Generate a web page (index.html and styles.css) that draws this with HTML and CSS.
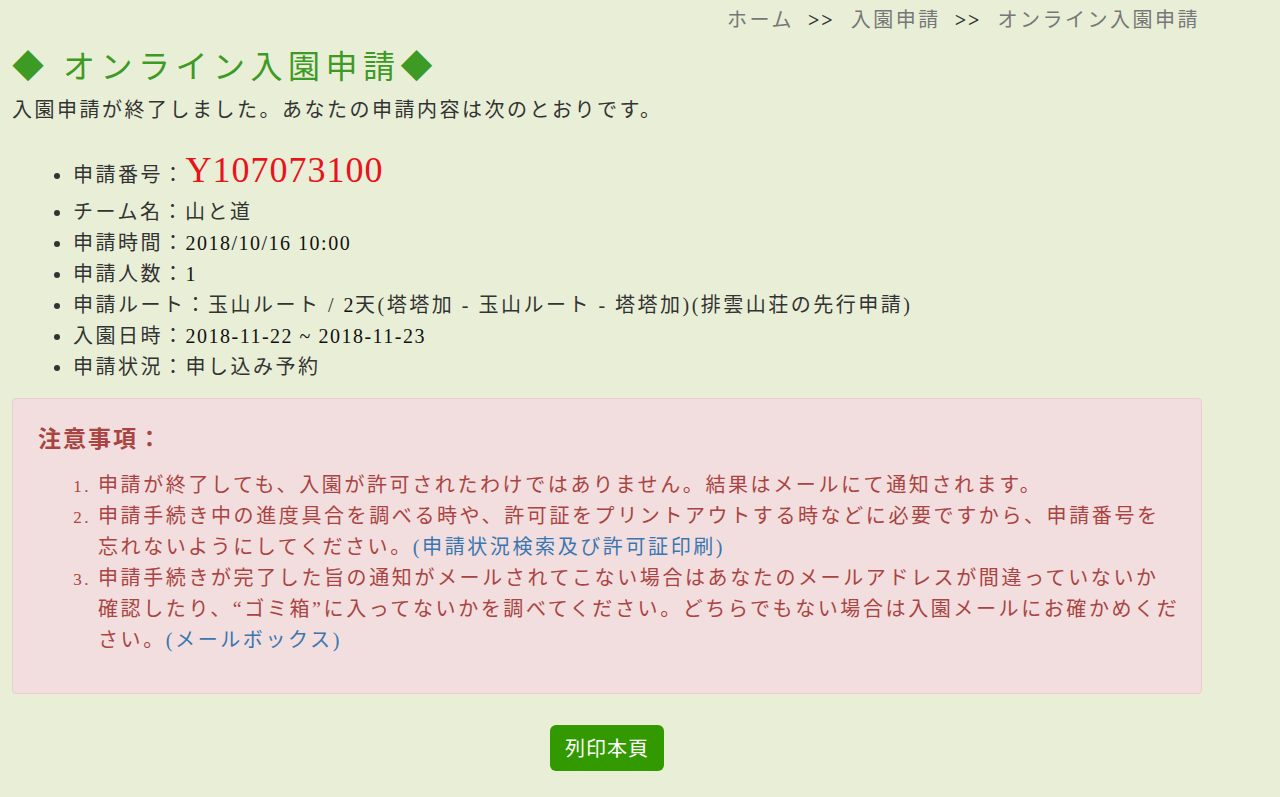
FILE: index.html
```html
<!DOCTYPE html>
<html lang="ja">
<head>
    <meta charset="UTF-8">
    <meta name="viewport" content="width=device-width, initial-scale=1.0">
    <title>オンライン入園申請</title>
    <link rel="stylesheet" href="styles.css">
</head>
<body>
    <div class="container">
        <!-- Breadcrumb -->
        <div class="breadcrumb">
            <a href="javascript:void(0)">ホーム</a><span class="sep">&gt;&gt;</span><a href="javascript:void(0)">入園申請</a><span class="sep">&gt;&gt;</span><span class="current">オンライン入園申請</span>
        </div>

        <h1 class="page-title">◆ オンライン入園申請◆</h1>
        <p class="intro">入園申請が終了しました。あなたの申請内容は次のとおりです。</p>

        <!-- Application summary -->
        <ul class="summary">
            <li class="first">申請番号：<span class="apply-no">Y107073100</span></li>
            <li>チーム名：山と道</li>
            <li>申請時間：<span class="num">2018/10/16 10:00</span></li>
            <li>申請人数：<span class="num">1</span></li>
            <li>申請ルート：玉山ルート / <span class="num">2</span>天(塔塔加 - 玉山ルート - 塔塔加)(排雲山荘の先行申請)</li>
            <li>入園日時：<span class="num">2018-11-22 ~ 2018-11-23</span></li>
            <li>申請状況：申し込み予約</li>
        </ul>

        <!-- Notes -->
        <div class="alert">
            <h3>注意事項：</h3>
            <ol>
                <li>申請が終了しても、入園が許可されたわけではありません。結果はメールにて通知されます。</li>
                <li>申請手続き中の進度具合を調べる時や、許可証をプリントアウトする時などに必要ですから、申請番号を<br>忘れないようにしてください。<a href="javascript:void(0)">(申請状況検索及び許可証印刷)</a></li>
                <li>申請手続きが完了した旨の通知がメールされてこない場合はあなたのメールアドレスが間違っていないか<br>確認したり、“ゴミ箱”に入ってないかを調べてください。どちらでもない場合は入園メールにお確かめくだ<br>さい。<a href="javascript:void(0)">(メールボックス)</a></li>
            </ol>
        </div>

        <div class="actions">
            <button onclick="window.print()">列印本頁</button>
        </div>
    </div>
</body>
</html>
```

FILE: styles.css
```css
/* Reset and base styles */
* {
    box-sizing: border-box;
    margin: 0;
    padding: 0;
}

body {
    font-family: 'Liberation Serif', 'Noto Sans CJK JP', serif;
    font-size: 20px;
    letter-spacing: 2.5px;
    line-height: 31px;
    color: #333;
    background-color: #e9efd7;
}

.container {
    width: 1190px;
    margin-left: 12px;
}

/* Breadcrumb */
.breadcrumb {
    padding-top: 5px;
    padding-right: 2px;
    line-height: 30px;
    text-align: right;
    color: #777;
}

.breadcrumb a {
    color: #777;
    text-decoration: none;
}

.breadcrumb .sep {
    margin: 0 16px 0 14px;
    color: #333;
    font-weight: bold;
    letter-spacing: 2px;
}

/* Title */
.page-title {
    margin-top: 12px;
    font-size: 32px;
    line-height: 40px;
    font-weight: normal;
    color: #3d9a24;
    letter-spacing: 5.5px;
}

.intro {
    margin-top: 8px;
}

/* Summary list */
.summary {
    margin-top: 24px;
    padding-left: 61px;
}

.summary li {
    line-height: 31px;
}

.summary li.first {
    margin-bottom: 6px;
}

.summary .num {
    color: #111;
    letter-spacing: 1.5px;
}

.summary .apply-no {
    font-size: 36px;
    line-height: 40px;
    color: #e8141b;
    letter-spacing: 1px;
}

/* Notes box */
.alert {
    margin-top: 15px;
    padding: 26px 14px 37px 25px;
    background-color: #f2dede;
    border: 1px solid #ebccd1;
    border-radius: 4px;
    color: #a94442;
    letter-spacing: 2.6px;
}

.alert h3 {
    font-size: 23px;
    line-height: 30px;
    font-weight: bold;
    letter-spacing: 2px;
}

.alert ol {
    margin-top: 15px;
    padding-left: 60px;
}

.alert li::marker {
    font-size: 17px;
}

.alert a {
    color: #3a76b0;
    text-decoration: none;
}

/* Print button */
.actions {
    margin-top: 31px;
    text-align: center;
}

button {
    padding: 7px 15px;
    background-color: #339900;
    color: white;
    border: none;
    border-radius: 6px;
    cursor: pointer;
    font-family: 'Noto Sans CJK JP', sans-serif;
    font-size: 20px;
    line-height: 32px;
    letter-spacing: 1px;
}

button:hover {
    background-color: #2b8000;
}
```
